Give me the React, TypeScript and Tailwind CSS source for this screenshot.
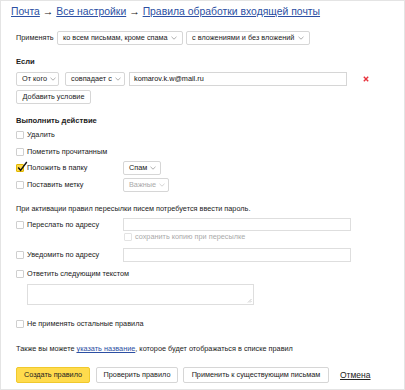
import React from "react";

const Chevron = ({ color = "#999" }: { color?: string }) => (
  <svg width="6" height="4" viewBox="0 0 6 4" className="shrink-0">
    <path d="M0.5 0.8 L3 3.2 L5.5 0.8" fill="none" stroke={color} strokeWidth="0.8" />
  </svg>
);

const Select = ({ label, w, h = "h-[14px]", disabled = false }: { label: string; w: string; h?: string; disabled?: boolean }) => (
  <div className={`${w} ${h} shrink-0 whitespace-nowrap border border-[#d6d6d6] rounded-[2px] bg-white flex items-center justify-between gap-[3px] px-[5px] ${disabled ? "text-[#aaa]" : "text-[#222]"}`}>
    <span>{label}</span>
    <Chevron color={disabled ? "#c8c8c8" : "#999"} />
  </div>
);

const Box = ({ checked = false, disabled = false }: { checked?: boolean; disabled?: boolean }) => (
  <div className={`relative w-[8px] h-[8px] shrink-0 rounded-[1px] border ${checked ? "bg-[#ffd84a] border-[#e0b800]" : disabled ? "border-[#e3e3e3] bg-white" : "border-[#cfcfcf] bg-white"}`}>
    {checked && (
      <svg width="11" height="11" viewBox="0 0 11 11" className="absolute left-[0px] top-[-4px]">
        <path d="M1.2 6.5 L3.6 9.3 L9.8 1" fill="none" stroke="#111" strokeWidth="1.4" />
      </svg>
    )}
  </div>
);

const Check = ({ label, checked = false }: { label: string; checked?: boolean }) => (
  <div className="flex items-center gap-[3px] w-[107px] shrink-0 whitespace-nowrap">
    <Box checked={checked} />
    <span>{label}</span>
  </div>
);

export default function App() {
  return (
    <div
      className="w-[405px] h-[390px] border border-[#e4e4e4] bg-white text-[7.3px] text-[#222] leading-none overflow-hidden whitespace-nowrap"
      style={{ fontFamily: '"Liberation Sans", Arial, sans-serif' }}
    >
      <div className="h-[23px] flex items-center pl-[10px] text-[10.4px] text-[#2c4fa3]">
        <span className="underline">Почта</span>
        <span className="text-[#222] mx-[3px]">→</span>
        <span className="underline">Все настройки</span>
        <span className="text-[#222] mx-[3px]">→</span>
        <span className="underline">Правила обработки входящей почты</span>
      </div>

      <div className="pl-[15px]">
        <div className="mt-[7px] h-[14px] flex items-center">
          <span className="w-[41px]">Применять</span>
          <Select label="ко всем письмам, кроме спама" w="w-[126px]" />
          <div className="w-[3px]" />
          <Select label="с вложениями и без вложений" w="w-[124px]" />
        </div>

        <div className="mt-[11px] h-[12px] flex items-center font-bold text-[7.6px]">Если</div>

        <div className="mt-[4px] h-[14px] flex items-center">
          <Select label="От кого" w="w-[43px]" />
          <div className="w-[6px]" />
          <Select label="совпадает с" w="w-[60px]" />
          <div className="w-[4px]" />
          <div className="w-[218px] h-[14px] border border-[#d6d6d6] flex items-center px-[4px] text-[#111]">komarov.k.w@mail.ru</div>
          <div className="ml-[16px] flex items-center">
            <svg width="6" height="6" viewBox="0 0 6 6">
              <path d="M0.8 0.8 L5.2 5.2 M5.2 0.8 L0.8 5.2" stroke="#e8323c" strokeWidth="1.4" />
            </svg>
          </div>
        </div>

        <div className="mt-[4px] h-[14px] flex items-center">
          <div className="h-[14px] w-[75px] border border-[#d6d6d6] rounded-[2px] flex items-center justify-center">Добавить условие</div>
        </div>

        <div className="mt-[11px] h-[12px] flex items-center font-bold text-[7.6px]">Выполнить действие</div>

        <div className="mt-[1px] h-[14px] flex items-center">
          <Check label="Удалить" />
        </div>
        <div className="mt-[3px] h-[14px] flex items-center">
          <Check label="Пометить прочитанным" />
        </div>
        <div className="mt-[2px] h-[14px] flex items-center">
          <Check label="Положить в папку" checked />
          <Select label="Спам" w="w-[38px]" />
        </div>
        <div className="mt-[3px] h-[14px] flex items-center">
          <Check label="Поставить метку" />
          <Select label="Важные" w="w-[46px]" disabled />
        </div>

        <div className="mt-[11px] h-[12px] flex items-center">При активации правил пересылки писем потребуется ввести пароль.</div>

        <div className="mt-[3px] h-[13px] flex items-center">
          <Check label="Переслать по адресу" />
          <div className="w-[228px] h-[13px] border border-[#dedede]" />
        </div>
        <div className="mt-[1px] h-[10px] flex items-center pl-[108px] gap-[3px] text-[#aaa]">
          <Box disabled />
          <span>сохранить копию при пересылке</span>
        </div>

        <div className="mt-[6px] h-[14px] flex items-center">
          <Check label="Уведомить по адресу" />
          <div className="w-[228px] h-[14px] border border-[#dedede]" />
        </div>

        <div className="mt-[6px] h-[12px] flex items-center">
          <Check label="Ответить следующим текстом" />
        </div>
        <div className="mt-[4px] ml-[11px] relative w-[227px] h-[21px] border border-[#dedede]">
          <svg width="5" height="5" viewBox="0 0 5 5" className="absolute right-[1px] bottom-[1px]">
            <path d="M1 4.5 L4.5 1 M3 4.5 L4.5 3" stroke="#aaa" strokeWidth="0.6" />
          </svg>
        </div>

        <div className="mt-[13px] h-[12px] flex items-center">
          <div className="flex items-center gap-[3px]">
            <Box />
            <span>Не применять остальные правила</span>
          </div>
        </div>

        <div className="mt-[13px] h-[12px] flex items-center">
          <span>
            Также вы можете <span className="text-[#2c4fa3] underline">указать название</span>, которое будет отображаться в списке правил
          </span>
        </div>

        <div className="mt-[12px] h-[16px] flex items-center">
          <div className="w-[74px] h-[16px] rounded-[2px] bg-[#ffdb4d] border border-[#f0c92c] flex items-center justify-center">Создать правило</div>
          <div className="w-[6px]" />
          <div className="w-[82px] h-[16px] rounded-[2px] border border-[#d6d6d6] flex items-center justify-center">Проверить правило</div>
          <div className="w-[5px]" />
          <div className="w-[146px] h-[16px] rounded-[2px] border border-[#d6d6d6] flex items-center justify-center">Применить к существующим письмам</div>
          <span className="ml-[11px] underline text-[8.5px]">Отмена</span>
        </div>
      </div>
    </div>
  );
}
